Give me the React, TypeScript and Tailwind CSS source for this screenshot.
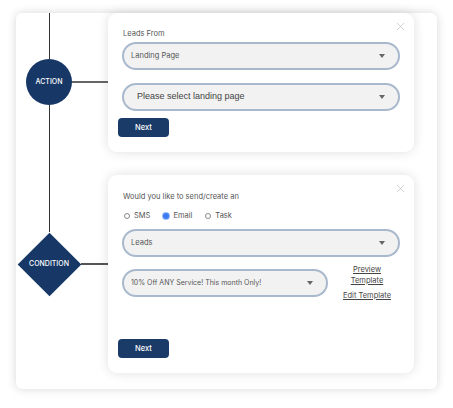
import React from "react";
import { X } from "lucide-react";

const font = "font-['Inter','Noto_Sans',sans-serif]";

const Caret = () => (
    <span className="w-0 h-0 border-l-[3.5px] border-r-[3.5px] border-t-[4px] border-l-transparent border-r-transparent border-t-[#666]" />
);

const Select = ({
    label,
    className = "",
    textClass = "text-[7.5px] text-[#555]",
}: {
    label: string;
    className?: string;
    textClass?: string;
}) => (
    <div
        className={`h-[28px] rounded-full border-2 border-[#a9b9cd] bg-[#f2f2f2] flex items-center justify-between pl-[7px] pr-[13px] ${className}`}
    >
        <span className={textClass}>{label}</span>
        <Caret />
    </div>
);

const Radio = ({ label, checked }: { label: string; checked?: boolean }) => (
    <label className="flex items-center gap-[4px] text-[7.5px] text-[#555]">
        {checked ? (
            <span className="w-[6px] h-[6px] rounded-full bg-[#3d7bf0] ring-1 ring-[#9dbcf5]" />
        ) : (
            <span className="w-[6px] h-[6px] rounded-full border border-[#888] bg-white" />
        )}
        {label}
    </label>
);

const NextButton = () => (
    <button className="block w-[51px] h-[19px] rounded-[4px] bg-[#1a3a68] text-white text-[7.5px] font-medium ml-[-4px]">
        Next
    </button>
);

const Card = ({
    children,
    className = "",
}: {
    children: React.ReactNode;
    className?: string;
}) => (
    <div
        className={`relative w-[306px] bg-white rounded-[9px] shadow-[0_0_12px_rgba(0,0,0,0.13)] px-[14px] ${className}`}
    >
        <X
            size={13}
            strokeWidth={1.1}
            className="absolute top-[7px] right-[7px] text-[#b5b5b5]"
        />
        {children}
    </div>
);

export default function App() {
    return (
        <div className={`w-[453px] h-[408px] bg-white pt-[13px] px-[16px] ${font}`}>
            <div className="w-[421px] h-[376px] bg-white rounded-[6px] shadow-[0_0_10px_rgba(0,0,0,0.16)] flex">
                {/* flow line column */}
                <div className="w-[92px] flex flex-col">
                    <div className="ml-[32.5px] w-px h-[46px] bg-[#333]" />
                    <div className="flex items-center pl-[10px]">
                        <div className="w-[46px] h-[46px] rounded-full bg-[#173767] flex items-center justify-center text-white text-[7px] font-medium">
                            ACTION
                        </div>
                        <div className="flex-1 h-[1.5px] bg-[#666]" />
                    </div>
                    <div className="ml-[32.5px] w-px h-[127px] bg-[#333]" />
                    <div className="flex items-center pl-[1px]">
                        <div className="relative w-[64px] h-[64px] flex items-center justify-center">
                            <div className="absolute w-[45px] h-[45px] bg-[#173767] rotate-45" />
                            <span className="relative text-white text-[7px] font-medium">
                                CONDITION
                            </span>
                        </div>
                        <div className="flex-1 h-[1.5px] bg-[#555]" />
                    </div>
                </div>

                {/* cards */}
                <div className="flex flex-col gap-[23px]">
                    <Card className="pt-[15px] pb-[15px]">
                        <div className="text-[7.5px] text-[#555] leading-[12px] pl-[1px] mb-[2px]">
                            Leads From
                        </div>
                        <Select label="Landing Page" />
                        <Select
                            label="Please select landing page"
                            className="mt-[13px] pl-[13px]"
                            textClass="text-[9px] text-[#444] font-['Liberation_Sans',Arial,sans-serif]"
                        />
                        <div className="flex mt-[7px]">
                            <NextButton />
                        </div>
                    </Card>

                    <Card className="pt-[16px] pb-[15px]">
                        <div className="text-[7.5px] text-[#555] leading-[12px] pl-[1px]">
                            Would you like to send/create an
                        </div>
                        <div className="flex items-center gap-[13px] h-[12px] mt-[7px] pl-[2px]">
                            <Radio label="SMS" />
                            <Radio label="Email" checked />
                            <Radio label="Task" />
                        </div>
                        <Select label="Leads" className="mt-[7px]" />
                        <div className="flex mt-[12px]">
                            <Select
                                label="10% Off ANY Service! This month Only!"
                                className="w-[206px]"
                                textClass="text-[7px] text-[#555]"
                            />
                            <div className="flex-1 pl-[6px] -mt-[5px] flex flex-col items-center text-[7.5px] text-[#444] underline leading-[11px]">
                                <span>Preview</span>
                                <span>Template</span>
                                <span className="mt-[4px]">Edit Template</span>
                            </div>
                        </div>
                        <div className="flex mt-[38px]">
                            <NextButton />
                        </div>
                    </Card>
                </div>
            </div>
        </div>
    );
}
